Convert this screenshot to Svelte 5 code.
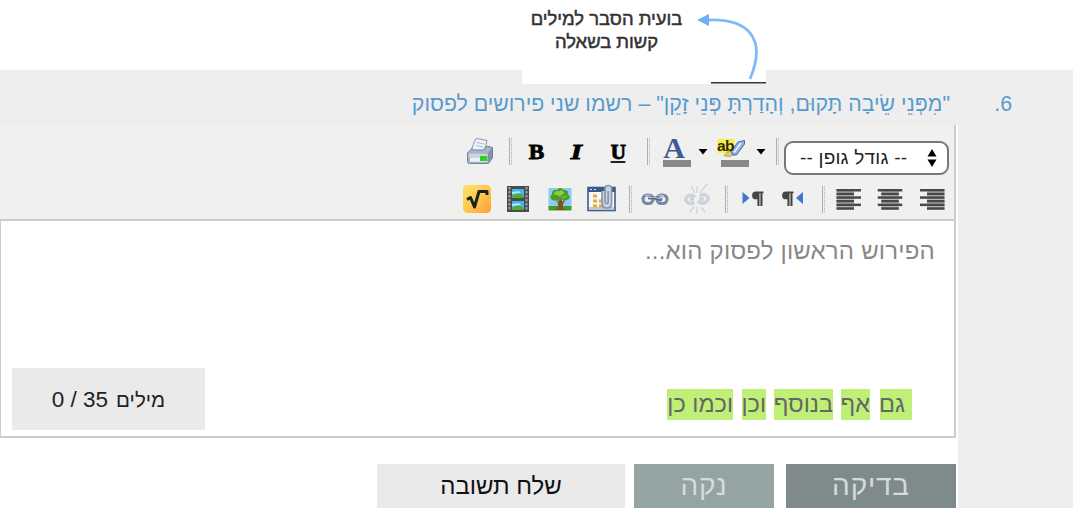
<script>
  const row1 = [
    ['print', 36], ['sep', 24], ['bold', 28], ['italic', 52], ['underline', 32], ['sep', 28],
    ['color', 30], ['caret', 22], ['marker', 36], ['caret', 22], ['sep', 10]
  ];
  const row2 = [
    ['root', 34], ['film', 48], ['tree', 36], ['clip', 46], ['sep', 12], ['link', 38], ['unlink', 46],
    ['sep', 12], ['ltr', 38], ['rtl', 44], ['sep', 18], ['left', 32], ['center', 52], ['right', 32]
  ];
  const bars = [0, 1, 2, 3, 4, 5];
</script>

{#snippet pilcrow(x)}
  <g transform="translate({x} 0)" fill="#444">
    <path d="M4.500 7.500H12v1.800h-1V22H8.900V9.300H8V22H5.900v-6.700H4.500A3.900 3.900 0 0 1 4.500 7.500z" />
  </g>
{/snippet}

{#snippet icon(name)}
  {#if name === 'sep'}
    <span class="sep"></span>
  {:else if name === 'caret'}
    <svg width="10" height="28" viewBox="0 0 10 28"><path d="M0.500 9h9L5 14.500z" fill="#000" /></svg>
  {:else if name === 'bold'}
    <b class="letter">B</b>
  {:else if name === 'italic'}
    <b class="letter slant">I</b>
  {:else if name === 'underline'}
    <b class="letter under">U</b>
  {:else}
    <svg width="30" height="30" viewBox="0 0 30 30">
      {#if name === 'print'}
        <path d="M6.500 10.500 10 1Q10.500-.5 12-.5L22 1.500 19 13 8 12.500z" fill="#eef1f8" stroke="#8a97ae" />
        <path d="M12 3.500l7 1.500M11 6.500l7 1.500" stroke="#b0bbcd" />
        <path d="M2.500 14 7 9.500 8.500 11h10L22 7l5.500 1.500V19l-4 5.500h-19q-2 0-2-2z" fill="#a8b4c8" stroke="#74819a" />
        <path d="M3 14.500h20l4-6v10l-4 5.500V15" fill="#8290a7" />
        <path d="M3.500 14.500h19V18h-19z" fill="#cbd4e1" />
        <path d="M5 18.500h17v4.200H5z" fill="#f0f3f6" />
        <path d="M15 17h7v5h-7z" fill="#2bd51d" />
      {:else if name === 'color'}
        <text x="12" y="19" text-anchor="middle" class="glyph-a">A</text>
        <rect x="1" y="21" width="28" height="7" fill="#888" />
      {:else if name === 'marker'}
        <rect x="0.500" y="0" width="17" height="14" fill="#fbef42" />
        <path d="M7 16.500q3-4.500 7-4.500l3 3q-3 4-10 1.500z" fill="#e2cd66" stroke="#8d7835" stroke-width=".6" />
        <path d="M14 12.500 21 3l6.500-1.500V5l-8 11h-3.500z" fill="#8fb2e2" stroke="#47699e" />
        <path d="m17 13.500 7-9.500" stroke="#f2f8ff" stroke-width="1.500" />
        <text x="0" y="11.500" class="glyph-ab">ab</text>
        <rect x="4" y="21" width="28" height="7" fill="#888" />
      {:else if name === 'root'}
        <rect x="1" y="1" width="28" height="28" rx="4.500" fill="url(#gold)" />
        <path d="M5 15.500 8.500 13.500l4 9.500L17 7.500h8v3.500" fill="none" stroke="#15221f" stroke-width="3" stroke-linejoin="round" />
      {:else if name === 'film'}
        <rect x="4" y="2" width="22" height="26" fill="#484c4e" />
        <path d="M6.500 3v24M23.500 3v24" stroke="#a0a4a5" stroke-width="2" stroke-dasharray="2.500 1.500" />
        <path d="M9 5h12v9H9zM9 17h12v9H9z" fill="#45b5e9" />
        <path d="m9 12 6-3 6 3v2H9zm0 12 6-3 6 3v2H9z" fill="#55a832" />
        <path d="m9 8 7-1 2 2-9 1zm0 12 7-1 2 2-9 1z" fill="#a9e9f5" />
      {:else if name === 'tree'}
        <rect x="3.500" y="4" width="23" height="20" fill="#8fcaf6" />
        <path d="M3.500 22h23v4.500h-23z" fill="#35a02b" />
        <path d="m10 15 3.500 3.500V15H17v3l4-3-3 5v4l3 2H10l3-3v-3.500z" fill="#8a4f20" />
        <path d="M7 16q-3-3 0-6 0-5 5-4 3-4 7 0 5 0 4 4 4 4-1 6-3 1-5-.5-5 2-10 .5z" fill="#4b9e27" />
        <path d="M9 10q2-4 5-2 3-3 5 1-2 1-4 3-3-2-6-2zM17 14l5-2" fill="#8fcc42" stroke="#8fcc42" />
      {:else if name === 'clip'}
        <rect x="2" y="3.500" width="27" height="23" fill="#f7f8fa" stroke="#3e5d88" stroke-width="1.600" />
        <path d="M2 3.500h27V8H2z" fill="#385b8b" /><path d="M4 5.500h2m2 0h2" stroke="#dce8f7" />
        <path d="M3 23h25v3H3z" fill="#bcc8d9" />
        <path d="M7 10.500h4v3H7zm0 5h4v3H7zm0 5h4v3H7zm6-5h3v3h-3zm0 5h3v3h-3z" fill="#e6ac2c" />
        <path d="M16 7v12q0 5 4.800 5t4.800-5V5q0-3.500-3.300-3.500T19 5v13q0 1.600 1.600 1.600t1.600-1.600V7" fill="#cbd4e0" stroke="#8796ae" stroke-width="1.700" />
      {:else if name === 'link'}
        <g fill="none" stroke="#7688a8" stroke-width="3.200"><rect x="3" y="11" width="10" height="8.500" rx="4.200" /><rect x="17" y="11" width="10" height="8.500" rx="4.200" /></g>
        <path d="M8 14q8-1 14 2" fill="none" stroke="#4d648c" stroke-width="3.200" /><path d="M8 13.500q7-1 13 1.500M5 12q3-2 6 0M18 12q3-2 6 0" fill="none" stroke="#c1cee2" />
      {:else if name === 'unlink'}
        <g fill="none" stroke="#ccd3de" stroke-width="3.400"><path d="M13 13q-3-3-7-1-4 3-1 6 4 3 7 0M16 17q4 4 8 1 4-3 1-6-4-3-7 0M8 15h4m5 0h5" /></g>
        <path d="m9 2 4 7m2-7v7m10-9-7 9M8 28l4-6m3 8v-7m8 5-4-5" stroke="#d0d5dd" stroke-width="1.400" />
      {:else if name === 'ltr'}
        {@render pilcrow(15.5)}<path d="m6.500 8 7 6-7 6z" fill="#3f75d6" />
      {:else if name === 'rtl'}
        {@render pilcrow(4.5)}<path d="m26 8-7 6 7 6z" fill="#3f75d6" />
      {:else}
        {#each bars as i}
          {@const w = i % 2 ? 17.5 : 24.5}
          <rect x={name === 'left' ? 3.5 : name === 'right' ? 27.5 - w : 15 - w / 2} y={5 + i * 3.65} width={w} height="2.500" fill="#484848" />
        {/each}
        <rect x={name === 'left' ? 3.5 : name === 'right' ? 10 : 6.5} y="5" width="17.500" height="20.500" fill="#484848" opacity=".3" />
      {/if}
    </svg>
  {/if}
{/snippet}

<svg width="0" height="0" class="defs"><defs><linearGradient id="gold" x2="1" y2="1"><stop stop-color="#ffe06c" /><stop offset=".5" stop-color="#ffc94f" /><stop offset="1" stop-color="#ff9d35" /></linearGradient></defs></svg>

<div class="page">
  <header>
    <div class="callout" dir="rtl">בועית הסבר למילים<br />קשות בשאלה</div>
    <svg class="arrow" width="75" height="84" viewBox="691 0 75 84">
      <path d="M707 20C749 18 767 39 750 79" fill="none" stroke="#80b9fa" stroke-width="2.800" />
      <path d="m697 20 12-6v12z" fill="#70aff8" />
      <path d="M711 82.800h55" stroke="#333" stroke-width="1.600" />
    </svg>
  </header>
  <main>
    <div class="question" dir="rtl">
      <span class="num">6.</span>
      <span class="q">"מִפְּנֵי שֵׂיבָה תָּקוּם, וְהָדַרְתָּ פְּנֵי זָקֵן" – רשמו שני פירושים לפסוק</span>
    </div>
    <div class="panel">
      <div class="toolbar">
        <div class="row first">
          {#each row1 as [name, w]}<span class="cell" style="width:{w}px">{@render icon(name)}</span>{/each}
          <div class="select"><span dir="rtl">-- גודל גופן --</span>
            <svg width="12" height="20" viewBox="0 0 12 20"><path d="M1.500 8.500 6 1l4.500 7.500zM1.500 11.500 6 19l4.500-7.500z" /></svg>
          </div>
        </div>
        <div class="row second">
          {#each row2 as [name, w]}<span class="cell" style="width:{w}px">{@render icon(name)}</span>{/each}
        </div>
      </div>
      <div class="editor">
        <p dir="rtl">הפירוש הראשון לפסוק הוא...</p>
        <div class="bottom">
          <div class="count" dir="ltr"><span>0 / 35</span><span class="unit">מילים</span></div>
          <div class="words" dir="rtl">
            <mark class="w1">גם</mark><mark class="w2">אף</mark><mark class="w3">בנוסף</mark><mark class="w4">וכן</mark><mark class="w5">וכמו כן</mark>
          </div>
        </div>
      </div>
      <div class="actions">
        <button class="send">שלח תשובה</button>
        <button class="clear">נקה</button>
        <button class="check">בדיקה</button>
      </div>
    </div>
  </main>
</div>

<style>
  :global(body) { margin: 0; background: #fff; }
  .defs { position: absolute; }
  .page { width: 1073px; height: 514px; overflow: hidden; font-family: "Liberation Sans", sans-serif; }
  header { display: flex; height: 84px; margin-bottom: -14px; width: 244px; margin-left: 522px; background: #fff; position: relative; }
  .callout { box-sizing: border-box; width: 169px; padding-top: 7px; text-align: center; font-size: 18.4px; line-height: 23px; color: #333; -webkit-text-stroke: .5px #333; white-space: nowrap; }
  .arrow { display: block; }
  main { height: 438px; background: #eee; }
  .question { height: 55px; box-sizing: border-box; padding: 21px 61px 0 0; display: flex; font-size: 21.3px; line-height: 26px; color: #579bce; white-space: nowrap; }
  .num { width: 62px; }
  .panel { width: 958px; height: 383px; background: #fff; }
  .toolbar { width: 956px; height: 94px; box-sizing: border-box; background: #f0f0ee; border-right: 2px solid #ccc; overflow: hidden; }
  .row { display: flex; align-items: center; }
  .first { padding: 12px 0 0 462px; height: 34px; }
  .second { padding: 12px 0 0 460px; height: 32px; }
  .cell { flex: none; display: flex; justify-content: center; align-items: center; }
  .cell svg { flex: none; overflow: visible; }
  .sep { width: 1px; height: 27px; border-left: 1px solid #b5aaae; border-right: 1px dotted #aab0c0; }
  .first .sep { margin-bottom: 6px; }
  .letter { font: 900 22px/24px "Liberation Serif", serif; color: #000; -webkit-text-stroke: .9px #000; transform: scaleX(1.05); margin-bottom: 5px; }
  .slant { font-style: italic; transform: scaleX(1.3); }
  .under { font-size: 20px; line-height: 18px; border-bottom: 2px solid #222; margin-bottom: 2px; }
  .glyph-a { font: bold 30px "Liberation Serif", serif; fill: #3c5b95; }
  .glyph-ab { font: bold 15.5px "Liberation Sans", sans-serif; fill: #2d2a10; letter-spacing: -.5px; }
  .select { box-sizing: border-box; width: 165px; height: 34px; margin: 8px 0 0 2px; border: 2px solid #777; border-radius: 9px; background: #fff; display: flex; justify-content: space-between; align-items: center; padding: 0 9px 0 14px; font-size: 19px; letter-spacing: .2px; color: #222; white-space: nowrap; }
  .editor { box-sizing: border-box; width: 956px; height: 219px; border: 1px solid #ccc; border-right-width: 2px; border-top: 2px solid #ccc; border-bottom: 2px solid #ccc; background: #fff; display: flex; flex-direction: column; justify-content: space-between; }
  .editor p { margin: 14px 19px 0; font-size: 24px; line-height: 32px; letter-spacing: .2px; color: #888; }
  .bottom { display: flex; justify-content: space-between; padding: 0 42px 6px 11px; }
  .count { box-sizing: border-box; width: 193px; height: 62px; padding-top: 1px; background: #eaeaea; display: flex; justify-content: center; align-items: center; gap: 8px; font-size: 22.5px; color: #222; }
  .unit { font-size: 20.5px; }
  .words { display: flex; padding-top: 21px; font-size: 23.5px; line-height: 31px; white-space: nowrap; }
  mark { height: 31px; background: #c0ef78; color: #666; box-sizing: border-box; }
  .w1 { width: 32px; padding-right: 7px; }
  .w2 { width: 29px; margin-right: 10px; }
  .w3 { width: 59px; margin-right: 8px; }
  .w4 { width: 24px; margin-right: 8px; }
  .w5 { width: 66px; margin-right: 9px; }
  .actions { height: 70px; box-sizing: border-box; padding: 26px 0 0 377px; display: flex; }
  button { border: 0; padding: 0; height: 44px; font: 24px/44px "Liberation Sans", sans-serif; color: #d5dbdb; }
  .send { width: 248px; margin-right: 9px; background: #eaeaea; color: #111; }
  .clear { width: 140px; margin-right: 12px; background: #94a4a3; }
  .check { width: 170px; background: #7e8b8a; }
  .clear, .check { font-size: 28px; line-height: 42px; letter-spacing: .8px; }
</style>
